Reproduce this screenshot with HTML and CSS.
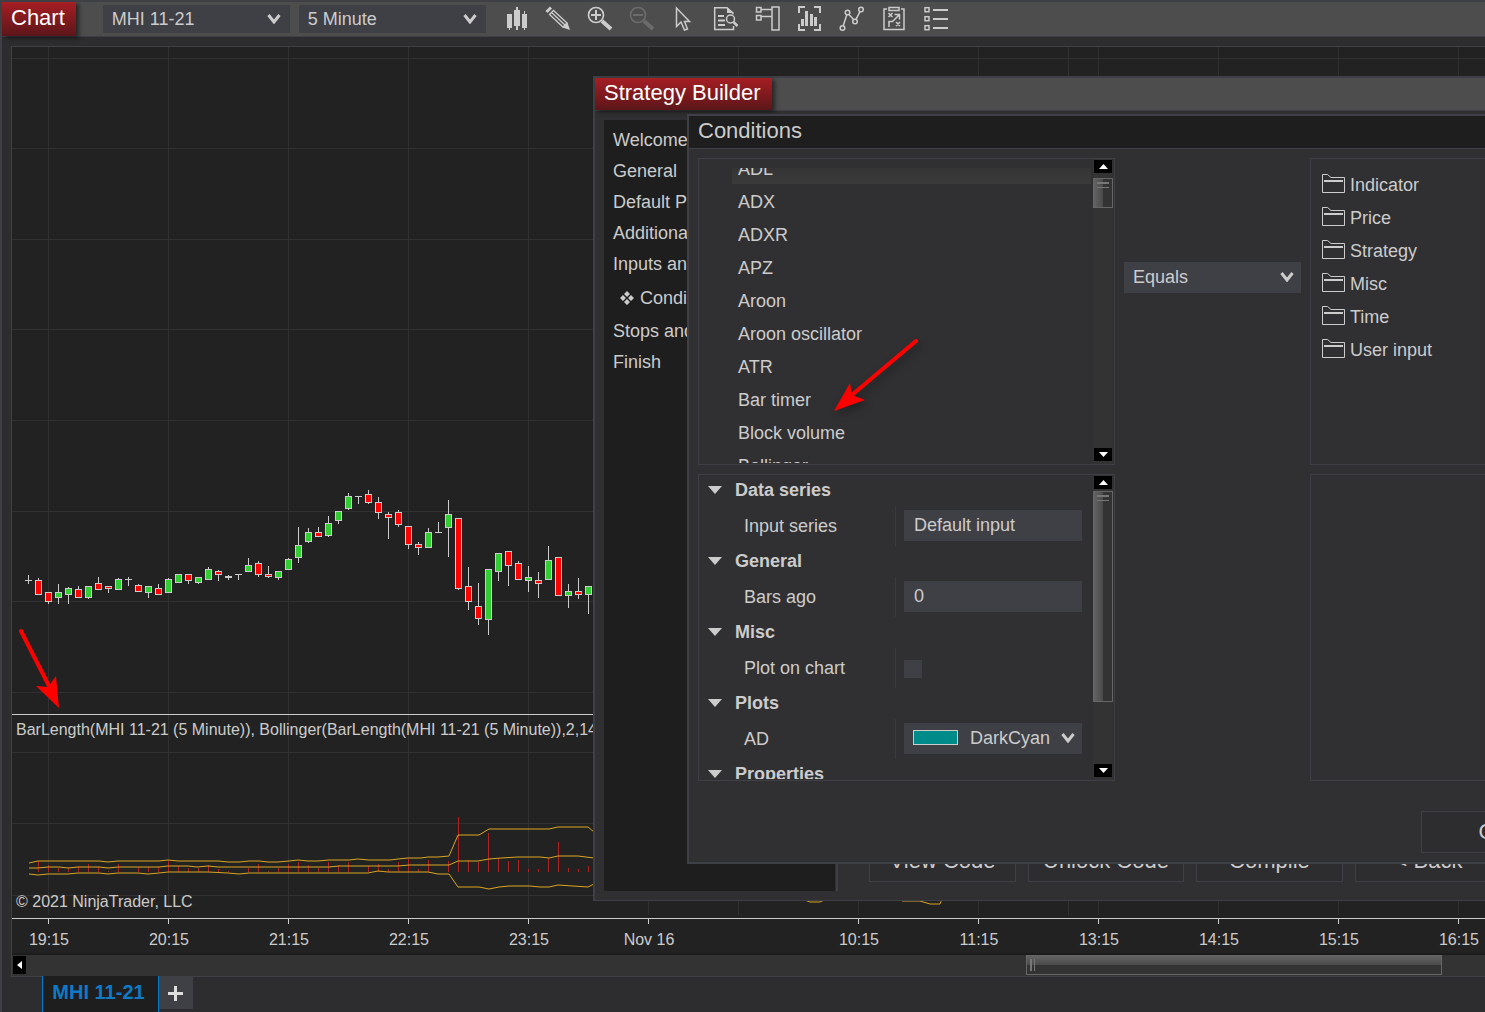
FILE: index.html
```
<!DOCTYPE html>
<html lang="en">
<head>
  <meta charset="UTF-8">
  <meta name="viewport" content="width=device-width, initial-scale=1.0">
  <title>Chart - MHI 11-21</title>
  <link rel="stylesheet" href="styles.css">
</head>
<body>

  <svg class="symbols" aria-hidden="true">
    <symbol id="chevron" viewBox="0 0 14 10">
      <path d="M1.5 1 L7 8 L12.500 1" fill="none" stroke="#ccc" stroke-width="3"/>
    </symbol>
    <symbol id="folder" viewBox="0 0 23 19">
      <path d="M.5 18.500 V.5 H5.500 L9 3.500 H22.500 V18.500 Z" fill="none" stroke="#ccc"/>
      <path d="M2 7 H21" stroke="#ccc" stroke-width="2"/>
    </symbol>
  </svg>

  <header class="toolbar">
    <h1 class="window-title">Chart</h1>
    <div class="select-box toolbar-select">
      <select aria-label="Instrument"><option>MHI 11-21</option></select>
      <svg class="chevron"><use href="#chevron"/></svg>
    </div>
    <div class="select-box toolbar-select">
      <select aria-label="Interval"><option>5 Minute</option></select>
      <svg class="chevron"><use href="#chevron"/></svg>
    </div>
    <div class="tools">
      <button class="tool" aria-label="Chart style">
        <svg viewBox="0 0 26 26"><path fill="#ccc" d="M4 8h5v14H7v2H6v-2H4zM13 1h2v3h2v16h-2v4h-2v-4h-2V4h2zM21 5h1v3h2v14h-2v2h-1v-2h-2V8h2z"/></svg>
      </button>
      <button class="tool" aria-label="Drawing tools">
        <svg viewBox="0 0 26 26"><path d="M1.500 6 L6 1.500" stroke="#ccc" stroke-width="3"/><path d="M4.500 8.500 L8.500 4.500 L22 17 L18 21 Z M6.500 6.500 L20 19" fill="none" stroke="#ccc" stroke-width="1.300"/><path d="M17.500 21.500 L22.500 16.500 L25 24 Z" fill="#ccc"/></svg>
      </button>
      <button class="tool" aria-label="Zoom in">
        <svg viewBox="0 0 26 26"><g fill="none" stroke="#ccc"><circle cx="9" cy="9" r="7.500" stroke-width="1.700"/><path d="M4 9H14M9 4V14" stroke-width="2"/><path d="M15 15L24 23" stroke-width="4"/></g></svg>
      </button>
      <button class="tool" aria-label="Zoom out" disabled>
        <svg viewBox="0 0 26 26"><g fill="none" stroke="#6b6b6b"><circle cx="9" cy="9" r="7.500" stroke-width="1.700"/><path d="M4 9H14" stroke-width="2"/><path d="M15 15L24 23" stroke-width="4"/></g></svg>
      </button>
      <button class="tool" aria-label="Cursor">
        <svg viewBox="0 0 26 26"><path d="M5.500 2V20.500L10 16L13.500 24L16.500 23L13.500 15.500H18.500Z" fill="none" stroke="#ccc" stroke-width="1.500"/></svg>
      </button>
      <button class="tool" aria-label="Data box">
        <svg viewBox="0 0 26 26"><g fill="none" stroke="#ccc" stroke-width="1.500"><path d="M20.500 20V23.500H1.700V1.700H14L20.500 8"/><path d="M5 10H11M5 14.500H12M5 19H12" stroke-width="2"/><circle cx="17.500" cy="13" r="4"/><path d="M20.500 16L24.500 20" stroke-width="2.500"/></g><path d="M14 1V7H21Z" fill="#ccc"/></svg>
      </button>
      <button class="tool" aria-label="Chart trader">
        <svg viewBox="0 0 26 26"><g fill="none" stroke="#ccc" stroke-width="1.500"><rect x="1.500" y="1.500" width="4.500" height="4.500"/><rect x="1.500" y="9.500" width="4.500" height="4.500"/><rect x="17" y="1" width="7" height="23"/><path d="M6 3.500H17M6 10.500H17"/></g></svg>
      </button>
      <button class="tool" aria-label="Data series">
        <svg viewBox="0 0 26 26"><path d="M8 1H2V7M17 1H23V7M8 24H2V18M17 24H23V18" fill="none" stroke="#ccc" stroke-width="2"/><path fill="#ccc" d="M4 13h3v7H4zM8 5h3v15H8zM13 8h3v12h-3zM17 11h3v9h-3z"/></svg>
      </button>
      <button class="tool" aria-label="Indicators">
        <svg viewBox="0 0 26 26"><g fill="none" stroke="#ccc" stroke-width="1.500"><circle cx="3.500" cy="22" r="2.300"/><circle cx="8.500" cy="6.500" r="2.300"/><circle cx="16" cy="15.500" r="2.300"/><circle cx="22" cy="3.500" r="2.300"/><path d="M4.200 19.800L7.800 8.700M9.900 8.400L14.600 13.600M17 13.300L21 5.700"/></g></svg>
      </button>
      <button class="tool" aria-label="Strategies">
        <svg viewBox="0 0 26 26"><g fill="none" stroke="#ccc" stroke-width="1.500"><path d="M6 3H3V23.500H23V3H20"/><rect x="8" y="1.500" width="10" height="3"/><path d="M7.500 7L11.500 11M11.500 7L7.500 11M15 16L19 20M19 16L15 20M8 21V15.500H11.500L18 9M13.500 8.500H18.500V13.500"/></g></svg>
      </button>
      <button class="tool" aria-label="Properties">
        <svg viewBox="0 0 26 26"><g fill="none" stroke="#ccc" stroke-width="1.500"><rect x="2" y="1.700" width="4" height="4"/><rect x="2" y="10.700" width="4" height="4"/><rect x="2" y="19.700" width="4" height="4"/><path d="M10 4H25M10 13H25M10 22H25" stroke-width="2"/></g></svg>
      </button>
    </div>
  </header>

  <main class="chart-frame">
    <svg class="plot" id="plot" role="img" aria-label="MHI 11-21 price chart"></svg>
    <div class="hscroll">
      <button class="scroll-left" aria-label="Scroll left">
        <svg viewBox="0 0 5 8"><path d="M5 0V8L0 4Z" fill="#fff"/></svg>
      </button>
      <div class="hscroll-thumb"></div>
    </div>
  </main>

  <nav class="tabs">
    <button class="tab">MHI 11-21</button>
    <button class="add-tab" aria-label="Add tab">
      <svg viewBox="0 0 15 15"><path d="M7.500 0V15M0 7.500H15" stroke="#ddd" stroke-width="3"/></svg>
    </button>
  </nav>

  <section class="window strategy-window">
    <div class="window-bar"><h2 class="window-title">Strategy Builder</h2></div>
    <div class="strategy-body">
      <ul class="steps">
        <li>Welcome</li>
        <li>General</li>
        <li>Default Properties</li>
        <li>Additional Data</li>
        <li>Inputs and Variables</li>
        <li class="current">
          <svg viewBox="0 0 14 14"><path fill="#ccc" d="M7 0l3 3-3 3-3-3zM7 8l3 3-3 3-3-3zM3 4l3 3-3 3-3-3zM11 4l3 3-3 3-3-3z"/></svg>
          Conditions and Actions
        </li>
        <li>Stops and Targets</li>
        <li>Finish</li>
      </ul>
      <div class="strategy-buttons">
        <button class="button">View Code</button>
        <button class="button">Unlock Code</button>
        <button class="button">Compile</button>
        <button class="button">&lt; Back</button>
      </div>
    </div>
  </section>

  <section class="window conditions-window">
    <h2 class="dialog-title">Conditions</h2>
    <div class="conditions-grid">
      <div class="panel">
        <ul class="indicator-list">
          <li class="selected">ADL</li>
          <li>ADX</li>
          <li>ADXR</li>
          <li>APZ</li>
          <li>Aroon</li>
          <li>Aroon oscillator</li>
          <li>ATR</li>
          <li>Bar timer</li>
          <li>Block volume</li>
          <li>Bollinger</li>
        </ul>
        <div class="vscroll">
          <button aria-label="Scroll up"><svg viewBox="0 0 9 5"><path d="M0 5H9L4.500 0Z" fill="#fff"/></svg></button>
          <div class="vscroll-thumb short"></div>
          <button class="down" aria-label="Scroll down"><svg viewBox="0 0 9 5"><path d="M0 0H9L4.500 5Z" fill="#fff"/></svg></button>
        </div>
      </div>

      <div class="select-box compare">
        <select aria-label="Comparison"><option>Equals</option></select>
        <svg class="chevron"><use href="#chevron"/></svg>
      </div>

      <div class="panel">
        <ul class="folder-list">
          <li><svg><use href="#folder"/></svg>Indicator</li>
          <li><svg><use href="#folder"/></svg>Price</li>
          <li><svg><use href="#folder"/></svg>Strategy</li>
          <li><svg><use href="#folder"/></svg>Misc</li>
          <li><svg><use href="#folder"/></svg>Time</li>
          <li><svg><use href="#folder"/></svg>User input</li>
        </ul>
      </div>

      <div class="panel">
        <div class="properties">
          <h3>Data series</h3>
          <div class="property">
            <label for="inputSeries">Input series</label>
            <div class="value"><input type="text" id="inputSeries" value="Default input"></div>
          </div>
          <h3>General</h3>
          <div class="property">
            <label for="barsAgo">Bars ago</label>
            <div class="value"><input type="text" id="barsAgo" value="0"></div>
          </div>
          <h3>Misc</h3>
          <div class="property">
            <label for="plotOnChart">Plot on chart</label>
            <div class="value"><input type="checkbox" id="plotOnChart"></div>
          </div>
          <h3>Plots</h3>
          <div class="property">
            <label for="adColor">AD</label>
            <div class="value">
              <div class="select-box color-select">
                <select id="adColor"><option>DarkCyan</option></select>
                <span class="swatch"></span>
                <svg class="chevron"><use href="#chevron"/></svg>
              </div>
            </div>
          </div>
          <h3>Properties</h3>
        </div>
        <div class="vscroll">
          <button aria-label="Scroll up"><svg viewBox="0 0 9 5"><path d="M0 5H9L4.500 0Z" fill="#fff"/></svg></button>
          <div class="vscroll-thumb long"></div>
          <button class="down" aria-label="Scroll down"><svg viewBox="0 0 9 5"><path d="M0 0H9L4.500 5Z" fill="#fff"/></svg></button>
        </div>
      </div>

      <div class="panel right-panel"></div>
    </div>
    <div class="dialog-buttons">
      <button class="button">OK</button>
      <button class="button">Cancel</button>
    </div>
    <svg class="pointer-arrow" viewBox="0 0 100 84" aria-hidden="true">
      <path d="M90 9 L27 62" stroke="#f00" stroke-width="4" stroke-linecap="round"/>
      <path d="M8 79 L24 51 L26 63 L39 68 Z" fill="#f00"/>
    </svg>
  </section>

  <script src="chart.js"></script>
</body>
</html>
```
FILE: styles.css
```
* {
  box-sizing: border-box;
}

body {
  margin: 0;
  height: 100vh;
  display: flex;
  flex-direction: column;
  position: relative;
  overflow: hidden;
  background-color: #2d2d30;
  border-top: 2px solid #3f3f46;
  border-left: 2px solid #3f3f46;
  color: #ccc;
  font-family: "Liberation Sans", Arial, sans-serif;
  font-size: 18px;
}

h1, h2, h3, ul {
  margin: 0;
  padding: 0;
}

ul {
  list-style: none;
}

button, input, select {
  font: inherit;
  color: inherit;
  border: none;
  border-radius: 0;
  margin: 0;
}

button {
  cursor: pointer;
  padding: 0;
}

svg {
  display: block;
  flex: none;
}

.symbols {
  position: absolute;
  width: 0;
  height: 0;
}

/* toolbar */

.toolbar {
  display: flex;
  align-items: center;
  height: 35px;
  flex: none;
  background-color: #4d4d4d;
  border-bottom: 1px solid #3f3f46;
}

.window-title {
  align-self: stretch;
  display: flex;
  align-items: center;
  padding: 0 11px 2px 9px;
  background: linear-gradient(#a51e23, #5c161a);
  box-shadow: 3px 2px 4px rgba(0, 0, 0, 0.5);
  color: #fff;
  font-size: 22px;
  font-weight: normal;
  white-space: nowrap;
}

.select-box {
  position: relative;
  height: 31px;
  background-color: #3f3f46;
}

.select-box select {
  appearance: none;
  width: 100%;
  height: 100%;
  padding: 0 28px 2px 9px;
  background: none;
}

.chevron {
  position: absolute;
  right: 7px;
  top: 50%;
  width: 14px;
  height: 10px;
  margin-top: -6px;
  pointer-events: none;
}

.toolbar-select {
  width: 187px;
  height: 28px;
  margin-right: 9px;
}

.toolbar-select select {
  padding-bottom: 0;
}

.toolbar-select .chevron {
  right: 9px;
  margin-top: -5px;
}

.window-title + .toolbar-select {
  margin-left: 27px;
}

.tools {
  display: flex;
}

.tool {
  width: 42px;
  height: 34px;
  display: flex;
  align-items: center;
  justify-content: center;
  background: none;
}

.tool svg {
  width: 26px;
  height: 26px;
}

/* chart */

.chart-frame {
  flex: 1;
  min-height: 0;
  display: flex;
  flex-direction: column;
  margin: 9px 0 0 9px;
  border: 1px solid #3f3f46;
  border-right: none;
}

.plot {
  flex: 1;
  min-height: 0;
  width: 100%;
  background-color: #222;
}

.plot text {
  fill: #ccc;
  font-size: 16px;
}

.plot .grid {
  stroke: #303030;
}

.plot .axis {
  stroke: #ccc;
}

.plot .band {
  fill: none;
  stroke: #daa520;
}

.hscroll {
  display: flex;
  height: 23px;
  padding: 0 43px 0 1px;
  background-color: #333;
  border-top: 2px solid #1c1c1c;
  justify-content: space-between;
}

.scroll-left {
  width: 13px;
  height: 18px;
  margin-top: 1px;
  display: flex;
  align-items: center;
  justify-content: center;
  background-color: #000;
}

.scroll-left svg {
  width: 5px;
  height: 8px;
}

.hscroll-thumb {
  width: 416px;
  height: 20px;
  border: 1px solid #666;
  border-top: none;
  background:
    linear-gradient(#777, #777) 3px 4px / 2px 12px no-repeat,
    linear-gradient(#777, #777) 7px 4px / 1px 12px no-repeat,
    linear-gradient(#666, #4a4a4a) 0 0 / 100% 10px no-repeat,
    #333;
}

.tabs {
  display: flex;
  align-items: flex-start;
  height: 35px;
  flex: none;
  padding-left: 40px;
}

.tab {
  width: 117px;
  height: 36px;
  margin-top: -1px;
  padding: 0 4px 4px 0;
  position: relative;
  background-color: #1e1e1e;
  border-left: 1px solid #007acc;
  border-right: 1px solid #007acc;
  color: #0e7ac8;
  font-size: 20px;
  font-weight: bold;
}

.add-tab {
  width: 34px;
  height: 32px;
  padding-right: 1px;
  display: flex;
  align-items: center;
  justify-content: center;
  background-color: #3f3f46;
}

.add-tab svg {
  width: 15px;
  height: 15px;
}

/* floating windows */

.window {
  position: absolute;
  display: flex;
  flex-direction: column;
  background-color: #303032;
  border: 2px solid #3f3f46;
}

.button {
  flex: none;
  min-width: 147px;
  height: 42px;
  padding: 0 14px;
  background-color: #2d2d30;
  border: 1px solid #3f3f46;
  font-size: 22px;
  white-space: nowrap;
}

.strategy-window {
  left: 591px;
  top: 74px;
  right: -30px;
  height: 825px;
  border-bottom-width: 1px;
}

.window-bar {
  display: flex;
  height: 33px;
  background-color: #4d4d4d;
  border-bottom: 1px solid #3f3f46;
}

.strategy-body {
  flex: 1;
  display: flex;
  padding: 9px 0 9px 9px;
}

.steps {
  width: 231px;
  padding: 5px 0 0 9px;
  background-color: #1e1e1e;
  white-space: nowrap;
}

.steps li {
  height: 31px;
  line-height: 31px;
}

.steps .current {
  display: flex;
  align-items: center;
  gap: 6px;
  height: 36px;
  padding-left: 7px;
}

.steps .current svg {
  width: 14px;
  height: 14px;
}

.strategy-buttons {
  display: flex;
  align-items: flex-end;
  gap: 12px;
  margin-left: 1px;
  padding: 0 0 9px 31px;
  border-left: 2px solid #3f3f46;
}

.conditions-window {
  left: 685px;
  top: 112px;
  width: 1051px;
}

.dialog-title {
  height: 33px;
  line-height: 30px;
  padding-left: 9px;
  background-color: #1e1e1e;
  border-bottom: 1px solid #3f3f46;
  font-size: 22px;
  font-weight: normal;
}

.conditions-grid {
  display: grid;
  grid-template-columns: 417px 177px 1fr;
  grid-auto-rows: 307px;
  gap: 9px;
  padding: 9px;
}

.panel {
  display: flex;
  min-width: 0;
  overflow: hidden;
  border: 1px solid #3f3f46;
}

.right-panel {
  grid-column: 3;
}

.indicator-list {
  flex: 1;
  margin: 9px 2px 1px 33px;
  overflow: hidden;
}

.indicator-list li {
  height: 33px;
  line-height: 33px;
  padding-left: 6px;
}

/* the list is scrolled half a row down */
.indicator-list .selected {
  margin-top: -15px;
  background: linear-gradient(#303032, #3a3a3a) 0 0 / 100% 31px no-repeat;
}

.vscroll {
  width: 20px;
  margin-right: 1px;
  padding: 1px 1px 3px;
  display: flex;
  flex-direction: column;
  background-color: #333;
}

.vscroll button {
  width: 18px;
  height: 13px;
  display: flex;
  align-items: center;
  justify-content: center;
  background-color: #000;
}

.vscroll button svg {
  width: 9px;
  height: 5px;
}

.vscroll .down {
  margin-top: auto;
}

.vscroll-thumb {
  margin: 2px -1px 0;
  border: 1px solid #666;
  border-left: none;
  background:
    linear-gradient(#777, #777) 4px 3px / 12px 2px no-repeat,
    linear-gradient(#777, #777) 4px 8px / 12px 1px no-repeat,
    linear-gradient(90deg, #666, #4a4a4a) 0 0 / 10px 100% no-repeat,
    #333;
}

.vscroll-thumb.short {
  height: 30px;
  margin-top: 5px;
}

.vscroll-thumb.long {
  height: 211px;
}

.compare {
  margin-top: 104px;
}

.folder-list {
  padding: 10px 0 0 11px;
}

.folder-list li {
  display: flex;
  gap: 5px;
  height: 33px;
  line-height: 33px;
}

.folder-list svg {
  width: 23px;
  height: 19px;
  margin-top: 5px;
}

.properties {
  flex: 1;
  margin-bottom: 1px;
  overflow: hidden;
}

.properties h3 {
  display: flex;
  align-items: center;
  height: 31px;
  padding-left: 9px;
  font-size: 18px;
}

.properties h3::before {
  content: "";
  margin: 0 13px 1px 0;
  border: 7px solid transparent;
  border-top: 8px solid #ccc;
  border-bottom: none;
}

.property {
  display: flex;
  height: 40px;
  line-height: 40px;
  padding-left: 45px;
}

.property label {
  width: 151px;
}

.value {
  width: 188px;
  padding: 4px 0 0 8px;
  border-left: 1px solid #3a3a3e;
  line-height: normal;
}

.value input[type="text"] {
  width: 178px;
  height: 31px;
  padding: 0 10px;
  background-color: #3f3f46;
}

.value input[type="checkbox"] {
  appearance: none;
  display: block;
  width: 18px;
  height: 18px;
  margin-top: 8px;
  background-color: #3f3f46;
}

.color-select {
  width: 178px;
}

.color-select select {
  padding-left: 66px;
}

.swatch {
  position: absolute;
  left: 9px;
  top: 7px;
  width: 45px;
  height: 15px;
  background-color: #008b8b;
  border: 1px solid #ccc;
  pointer-events: none;
}

.dialog-buttons {
  display: flex;
  justify-content: flex-end;
  gap: 12px;
  padding: 21px 9px 9px;
}

.pointer-arrow {
  position: absolute;
  left: 137px;
  top: 216px;
  width: 100px;
  height: 84px;
  pointer-events: none;
  filter: drop-shadow(3px 4px 4px rgba(0, 0, 0, 0.3));
}
```
FILE: chart.js
```
// one bar every 10px: [high, body top, body bottom, low, g = up / r = down / - = doji]
const bars = [
  [575, 580, 581, 584, '-'], [578, 580, 595, 595, 'r'], [592, 592, 602, 604, 'r'],
  [584, 592, 598, 604, 'g'], [587, 588, 595, 604, 'g'], [586, 589, 598, 598, 'r'],
  [586, 586, 598, 599, 'g'], [577, 583, 590, 590, 'r'], [586, 586, 589, 593, 'r'],
  [578, 579, 590, 590, 'g'], [577, 579, 580, 586, '-'], [584, 585, 592, 592, 'r'],
  [586, 586, 593, 598, 'g'], [584, 588, 595, 595, 'r'], [578, 579, 593, 593, 'g'],
  [574, 574, 583, 583, 'g'], [574, 574, 581, 584, 'r'], [577, 577, 583, 584, 'g'],
  [567, 569, 580, 580, 'g'], [570, 571, 575, 581, 'r'], [575, 576, 578, 580, '-'],
  [574, 574, 575, 580, '-'], [558, 565, 572, 572, 'g'], [561, 563, 575, 577, 'r'],
  [566, 574, 577, 578, 'r'], [571, 571, 578, 580, 'g'], [558, 559, 570, 570, 'g'],
  [527, 545, 558, 563, 'g'], [528, 532, 542, 543, 'g'], [527, 532, 537, 537, 'r'],
  [516, 523, 536, 537, 'g'], [511, 511, 521, 524, 'g'], [493, 496, 509, 510, 'g'],
  [496, 496, 497, 504, '-'], [490, 494, 503, 504, 'r'], [497, 502, 513, 519, 'r'],
  [512, 514, 518, 539, 'r'], [510, 512, 525, 527, 'r'], [526, 526, 545, 549, 'r'],
  [542, 544, 548, 555, 'r'], [528, 532, 548, 548, 'g'], [522, 532, 533, 533, '-'],
  [500, 514, 528, 557, 'g'], [518, 518, 589, 590, 'r'], [567, 586, 602, 610, 'r'],
  [583, 606, 619, 625, 'r'], [569, 569, 620, 635, 'g'], [553, 553, 572, 581, 'g'],
  [551, 551, 566, 586, 'r'], [561, 563, 580, 580, 'r'], [566, 577, 581, 592, 'g'],
  [572, 580, 584, 598, 'r'], [546, 560, 580, 580, 'g'], [557, 557, 596, 596, 'r'],
  [584, 591, 596, 608, 'g'], [578, 591, 595, 599, 'r'], [586, 586, 595, 614, 'g']
];

// top of each BarLength bar, 0 = no bar
const lengths = [
  861, 865, 868, 868, 866, 864, 867, 871, 864, 0, 867, 867, 867, 861, 866, 868, 868, 865, 869,
  871, 0, 868, 864, 871, 868, 864, 862, 865, 868, 862, 865, 862, 0, 866, 864, 869, 862, 859,
  869, 860, 0, 861, 817, 860, 862, 833, 858, 861, 860, 869, 869, 858, 842, 868, 869, 866
];

const bands = [
  '29,863 38,861 99,861 108,862 118,861 159,861 168,860 178,861 218,861 228,862 239,862 249,861 259,861 268,862 278,862 289,861 298,860 308,861 318,861 329,860 349,860 358,859 369,860 390,860 398,859 408,858 421,858 428,857 438,857 449,856 458,835 479,835 489,829 549,829 558,827 588,827 594,832',
  '29,868 38,868 48,867 59,867 68,868 78,867 99,867 108,868 118,867 159,867 168,866 188,866 197,867 208,866 218,867 329,867 339,866 398,866 409,865 449,865 458,861 478,861 489,859 501,858 518,857 540,857 549,858 558,856 578,856 594,858',
  '29,874 38,875 48,874 68,874 78,873 99,873 108,874 118,873 138,873 148,874 159,873 168,872 208,872 228,873 239,874 249,873 368,873 378,871 388,872 428,872 438,874 449,874 458,887 479,887 489,889 499,887 509,886 530,886 540,887 549,887 558,885 588,887 594,884',
  '802,899 810,902 820,902 826,899',
  '902,901 920,901 930,904 940,904 942,899'
];

const times = [
  [48, '19:15'], [168, '20:15'], [288, '21:15'], [408, '22:15'], [528, '23:15'],
  [648, 'Nov 16'], [738, ''], [858, '10:15'], [978, '11:15'], [1068, ''],
  [1098, '13:15'], [1218, '14:15'], [1338, '15:15'], [1458, '16:15']
];

const prices = [58, 148, 239, 329, 420, 511, 601, 692, 752, 823, 895];
const colors = { g: '#32cd32', r: '#ff0000', '-': '#cccccc' };

function line(cls, x1, y1, x2, y2) {
  return `<line class="${cls}" x1="${x1}" y1="${y1}" x2="${x2}" y2="${y2}"/>`;
}

function rect(x, y, w, h, fill) {
  return `<rect x="${x}" y="${y}" width="${w}" height="${h}" fill="${fill}"/>`;
}

let out = '<g transform="translate(-12 -47)">';

times.forEach(([x]) => out += line('grid', x + 0.5, 47, x + 0.5, 915));
prices.forEach(y => out += line('grid', 12, y + 0.5, 4000, y + 0.5));

bars.forEach(([high, top, bottom, low, type], i) => {
  const x = 28 + i * 10;
  out += rect(x, high, 1, low - high, '#ccc');
  out += rect(x - 3, top, 7, bottom - top, '#ccc');
  if (bottom - top > 2) {
    out += rect(x - 2, top + 1, 5, bottom - top - 2, colors[type]);
  }
});

lengths.forEach((top, i) => {
  if (top) out += rect(38 + i * 10, top, 1, 872 - top, '#b22222');
});
bands.forEach(points => out += `<polyline class="band" points="${points}"/>`);

out += line('axis', 12, 714.5, 4000, 714.5);
out += line('axis', 12, 918.5, 4000, 918.5);
times.forEach(([x, label]) => {
  if (!label) return;
  out += line('axis', x + 0.5, 918, x + 0.5, 924);
  out += `<text x="${x + 1}" y="945" text-anchor="middle">${label}</text>`;
});

out += '<text x="16" y="735">BarLength(MHI 11-21 (5 Minute)), Bollinger(BarLength(MHI 11-21 (5 Minute)),2,14)</text>';
out += '<text x="16" y="907">© 2021 NinjaTrader, LLC</text>';

out += '<path d="M21 631 L49 686" stroke="#f00" stroke-width="4" stroke-linecap="round"/>';
out += '<path d="M59 708 L36 686 L48 687 L56 676 Z" fill="#f00"/>';
out += '</g>';

document.getElementById('plot').innerHTML = out;
```
